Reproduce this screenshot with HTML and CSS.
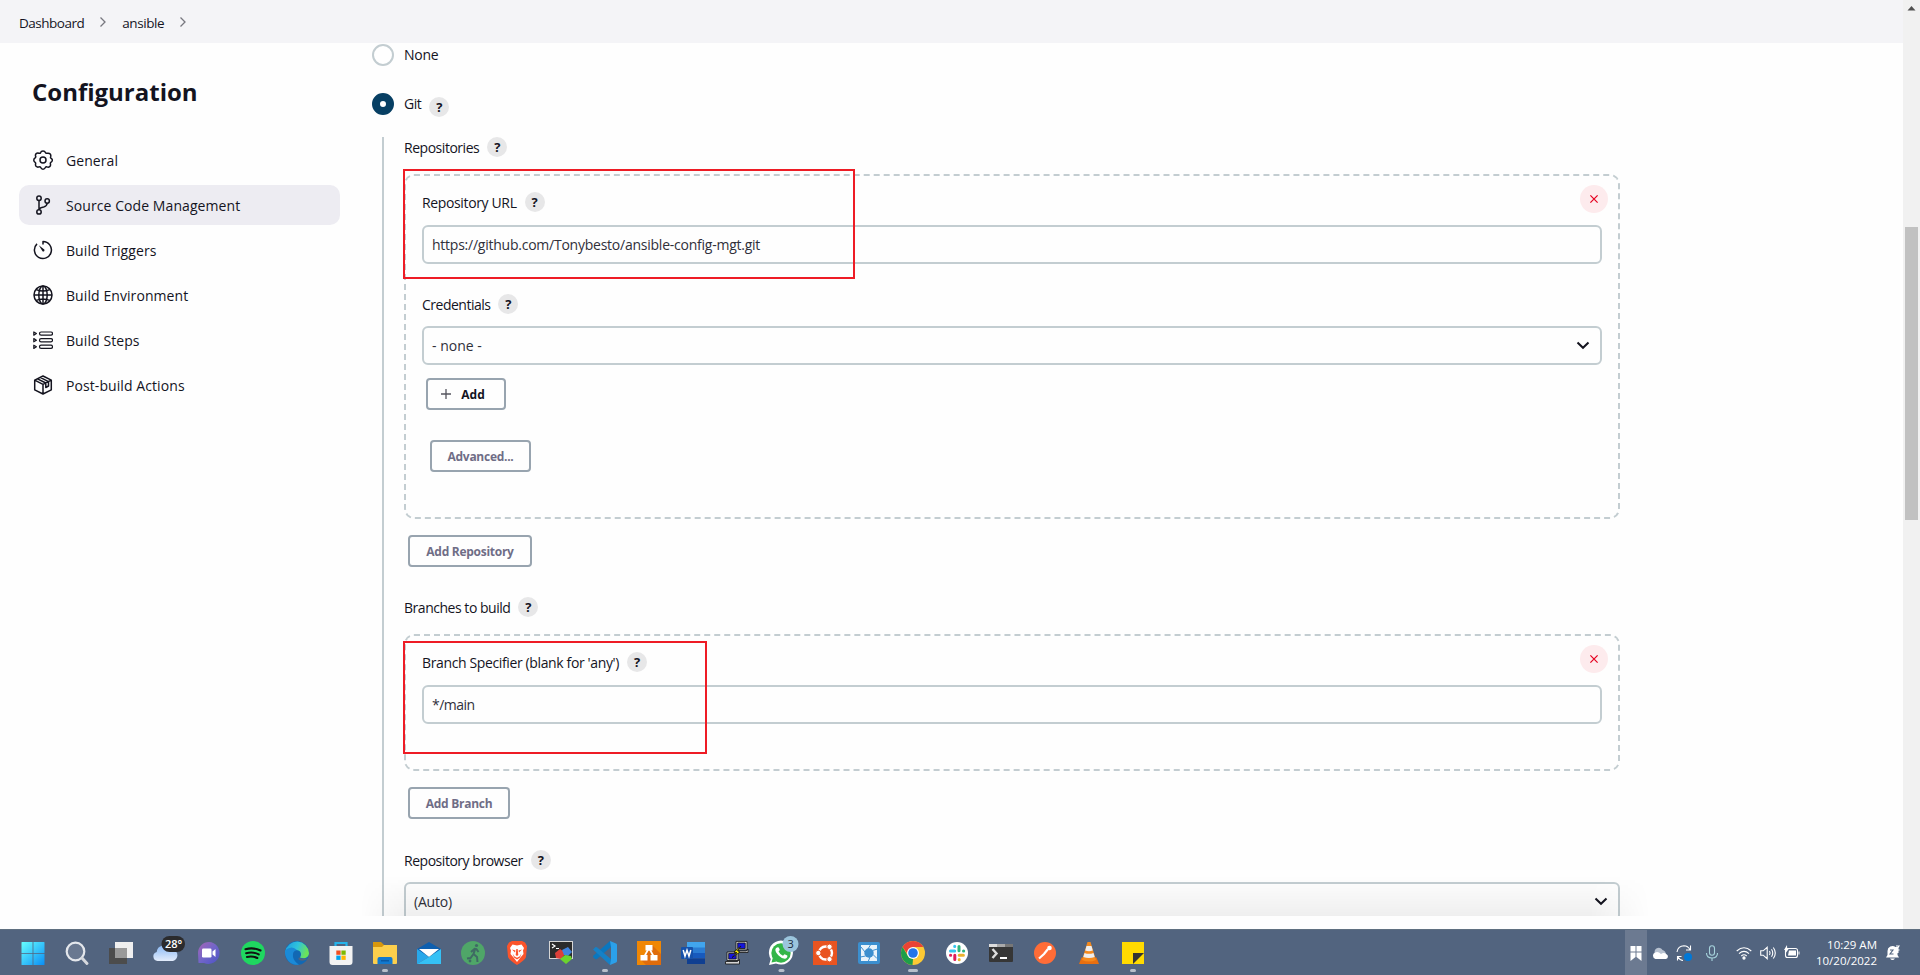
FILE: index.html
```html
<!DOCTYPE html>
<html lang="en">
<head>
<meta charset="utf-8">
<title>ansible Config</title>
<link rel="stylesheet" href="styles.css">
</head>
<body>
<div class="screen">
<header class="crumbs">
  <span class="crumb c-dash">Dashboard</span>
  <svg class="sep" viewBox="0 0 8 12"><path d="M1.5 1.5 6 6 1.5 10.5"/></svg>
  <span class="crumb c-ans">ansible</span>
  <svg class="sep" viewBox="0 0 8 12"><path d="M1.5 1.5 6 6 1.5 10.5"/></svg>
</header>
<div class="body">
  <aside class="side">
    <h1 class="title"><span>Configuration</span></h1>
    <nav class="nav">
      <a class="item"><svg class="ico" viewBox="0 0 20 20"><path d="M7.6 2.6Q8.200.9 10 .9t2.400 1.700q.3.9 1.600.7 2.200-.5 3.200.7t.4 2.800q-.4.900.6 1.600 1.300.8 1.100 2.100t-1.400 1.800q-.8.600-.5 1.600.5 1.800-.7 2.700t-2.700.3q-1-.3-1.600.6Q11.600 19.200 10 19.200t-2.300-1.700q-.6-.9-1.600-.600-1.700.6-2.800-.4t-.7-2.700q.3-.9-.5-1.500Q.700 11.500.800 10t1.300-2q.900-.6.500-1.600-.5-1.800.6-2.800t2.800-.3q1.200.2 1.600-.7z"/><circle cx="10" cy="10" r="3"/></svg><span class="n1">General</span></a>
      <a class="item active"><svg class="ico" viewBox="0 0 20 20"><circle cx="6" cy="3.300" r="2.200"/><circle cx="6" cy="16.900" r="2.200"/><circle cx="14.200" cy="6" r="2.200"/><path d="M6 5.500v9.200M14.200 8.200q-.3 3-3.500 3.700Q7 12.400 6 14.500"/></svg><span class="n2">Source Code Management</span></a>
      <a class="item"><svg class="ico" viewBox="0 0 20 20"><path d="M10 4.500V1.500a8.500 8.500 0 1 1-6 2.400"/><path class="fill" d="m5.800 5.300 5.500 4.200a1.300 1.300 0 0 1-1.800 1.800z"/></svg><span class="n3">Build Triggers</span></a>
      <a class="item"><svg class="ico" viewBox="0 0 20 20"><circle cx="10" cy="10" r="9"/><ellipse cx="10" cy="10" rx="4.200" ry="9"/><path d="M10 1v18M1 10h18M3.300 4.600Q10 7.500 16.700 4.600M3.300 15.400q6.700-2.900 13.400 0"/></svg><span class="n4">Build Environment</span></a>
      <a class="item"><svg class="ico thin" viewBox="0 0 20 20"><rect x="6.500" y="2" width="13" height="3.200" rx="1.600"/><rect x="6.500" y="8.600" width="13" height="3.200" rx="1.600"/><rect x="6.500" y="15.200" width="13" height="3.200" rx="1.600"/><path d="M.8 2v3.200l2.600-1.600zM.8 8.600v3.200l2.600-1.600zM.8 15.200v3.200l2.600-1.600z"/></svg><span class="n5">Build Steps</span></a>
      <a class="item"><svg class="ico" viewBox="0 0 20 20"><path d="m10 1 8.300 4.200v9.600L10 19l-8.300-4.200V5.200zM1.700 5.200 10 9.300l8.300-4.100M10 9.300V19M4.500 3.800l8.300 4.200v4.500l2.700-1.500V6.600L7.200 2.400"/></svg><span class="n6">Post-build Actions</span></a>
    </nav>
  </aside>
  <main class="main">
    <div class="radio-row first"><i class="radio"></i><span class="lbl l-none">None</span></div>
    <div class="radio-row second"><i class="radio on"></i><span class="lbl l-git">Git</span><b class="help low">?</b></div>
    <section class="nested">
      <div class="label"><span class="lbl l-repos">Repositories</span><b class="help">?</b></div>
      <div class="chunk repo">
        <svg class="del" viewBox="0 0 28 28"><circle cx="14" cy="14" r="14"/><path d="m10.400 10.400 7.200 7.200m0-7.200-7.200 7.200"/></svg>
        <div class="label"><span class="lbl l-url">Repository URL</span><b class="help">?</b></div>
        <div class="input"><span class="v-url">https://github.com/Tonybesto/ansible-config-mgt.git</span></div>
        <div class="label cred"><span class="lbl l-cred">Credentials</span><b class="help">?</b></div>
        <div class="input"><span class="v-none">- none -</span><svg class="caret" viewBox="0 0 14 9"><path d="m1.500 1.500 5.500 5.300 5.500-5.300"/></svg></div>
        <div class="btn add"><svg class="plus" viewBox="0 0 10 10"><path d="M5 0v10M0 5h10"/></svg><span class="b-add">Add</span></div>
        <div class="btn adv"><span class="b-adv">Advanced...</span></div>
        <div class="mark m1"></div>
      </div>
      <div class="btn add-repo"><span class="b-repo">Add Repository</span></div>
      <div class="label branches"><span class="lbl l-branches">Branches to build</span><b class="help">?</b></div>
      <div class="chunk branch">
        <svg class="del" viewBox="0 0 28 28"><circle cx="14" cy="14" r="14"/><path d="m10.400 10.400 7.200 7.200m0-7.200-7.200 7.200"/></svg>
        <div class="label"><span class="lbl l-spec">Branch Specifier (blank for 'any')</span><b class="help">?</b></div>
        <div class="input"><span class="v-main">*/main</span></div>
        <div class="mark m2"></div>
      </div>
      <div class="btn add-branch"><span class="b-branch">Add Branch</span></div>
      <div class="label browser"><span class="lbl l-browser">Repository browser</span><b class="help">?</b></div>
      <div class="input auto"><span class="v-auto">(Auto)</span><svg class="caret" viewBox="0 0 14 9"><path d="m1.500 1.500 5.500 5.300 5.500-5.300"/></svg></div>
    </section>
    <div class="shade"></div>
  </main>
</div>
<div class="scroll"><svg class="up" viewBox="0 0 17 17"><path d="M4.500 10.500h8l-4-4.500z"/></svg><div class="thumb"></div></div>
<footer class="taskbar">
  <div class="apps">
    <svg class="app" viewBox="0 0 24 24"><defs><linearGradient id="win" x1="0" y1="0" x2="1" y2="1"><stop offset="0" stop-color="#6ff"/><stop offset="1" stop-color="#0a8df5"/></linearGradient></defs><path fill="url(#win)" d="M.5 1.500a.5.500 0 0 1 .5-.5h10.600v11H.5zM12.400 1H23a.5.500 0 0 1 .5.500V12H12.400zM.5 12.800h11.100V24H1a.5.500 0 0 1-.5-.5zM12.400 12.800h11.100v10.700a.5.500 0 0 1-.5.500H12.400z"/></svg>
    <svg class="app" viewBox="0 0 24 24"><circle cx="10.500" cy="10.500" r="8.800" fill="#ffffff22" stroke="#e4e7ec" stroke-width="2.200"/><path d="m17 17 5 5.500" stroke="#d5d8dd" stroke-width="3" stroke-linecap="round"/></svg>
    <svg class="app" viewBox="0 0 24 24"><path fill="#4c4c4c" d="M0 7h18v16H0z"/><path fill="#efefef" d="M6 1h18v16H6z"/><path fill="#999" d="M6 7h12v10H6z"/></svg>
    <svg class="app wide" viewBox="0 0 34 28"><defs><linearGradient id="cl" x2="0" y2="1"><stop stop-color="#8ab9f5"/><stop offset="1" stop-color="#e3ecfb"/></linearGradient></defs><path fill="url(#cl)" d="M9.500 22a4.600 4.600 0 0 1-.8-9A7 7 0 0 1 22 10.500a5.700 5.700 0 0 1 3 11.500z"/><rect x="13.500" y="-3" width="23.500" height="16" rx="8" fill="#2b2b2d"/><text x="17" y="9" class="t-deg">28°</text></svg>
    <svg class="app" viewBox="0 0 24 24"><defs><linearGradient id="ch" x2="1" y2="1"><stop stop-color="#a565b5"/><stop offset=".5" stop-color="#7165c9"/><stop offset="1" stop-color="#4b52c5"/></linearGradient></defs><path fill="url(#ch)" d="M12 1a11 11 0 1 1-5 21H1.500L1 12A11 11 0 0 1 12 1z"/><rect x="5" y="7.500" width="9.500" height="9" rx="1.200" fill="#fff"/><path fill="#fff" d="m15.500 10.500 3-2.500v8l-3-2.500z"/></svg>
    <svg class="app" viewBox="0 0 24 24"><circle cx="12" cy="12" r="12" fill="#1fd760"/><path d="M4.500 8.200q8-2.200 15 1.300M5.200 12.200q6.800-1.800 12.500 1.200M6 15.900q5.500-1.300 10.300 1.100" fill="none" stroke="#111" stroke-width="2.100" stroke-linecap="round"/></svg>
    <svg class="app" viewBox="0 0 24 24"><defs><linearGradient id="ed" x2="1" y2=".3"><stop stop-color="#1d9be0"/><stop offset=".55" stop-color="#2fc3dc"/><stop offset="1" stop-color="#6be25a"/></linearGradient></defs><circle cx="12" cy="12" r="12" fill="#1268b3"/><path fill="url(#ed)" d="M.2 10.500A12 12 0 0 1 24 12c0 5-5.500 6.200-9 4.500 2.300-3 1-7.500-4-7.500Q4 9 1 15z"/><path fill="#1b8ad7" d="M.5 9Q7 4 12 9q-5 1-4 7 1 4.500 6 7.700A12 12 0 0 1 .5 9z"/><path fill="#52647f" d="M14 16.300q-2 3 3 3.500 4 .2 6-2.800-1 .8-4.500.6T14 16.300z"/></svg>
    <svg class="app" viewBox="0 0 24 24"><path d="M6.500 6V2h11v4" fill="none" stroke="#25b3ea" stroke-width="2.200"/><path fill="#f3f3f3" d="M.5 5h23v16a3 3 0 0 1-3 3h-17a3 3 0 0 1-3-3z"/><path fill="#f25022" d="M7.300 9.500h4.300v4.300H7.300z"/><path fill="#7fba00" d="M12.400 9.500h4.300v4.300h-4.300z"/><path fill="#00a4ef" d="M7.300 14.600h4.300v4.300H7.300z"/><path fill="#ffb900" d="M12.400 14.600h4.300v4.300h-4.300z"/></svg>
    <svg class="app dot" viewBox="0 0 24 28"><path fill="#d8970d" d="M0 1h8l3 3v5H0z"/><path fill="#fdcf4c" d="M0 6h9l2-2h13v18a1 1 0 0 1-1 1H1a1 1 0 0 1-1-1z"/><path fill="#1279cf" d="M4.500 23v-5a2 2 0 0 1 2-2h11a2 2 0 0 1 2 2v5z"/><path fill="#0a5aa5" d="M8 19h8v1.500H8z"/><rect x="9" y="28" width="6" height="3" rx="1.500" fill="#b7bfcb"/></svg>
    <svg class="app" viewBox="0 0 24 24"><path fill="#0f5fae" d="M0 8 12 1l12 7v5H0z"/><path fill="#fff" d="M2 8h20l-10 8z"/><path fill="#28a8ea" d="M0 8l12 8L0 23z"/><path fill="#35c1f5" d="M24 8v15H0l12-7z"/></svg>
    <svg class="app" viewBox="0 0 24 24"><circle cx="12" cy="12" r="12" fill="#4fa668"/><circle cx="15.500" cy="4.500" r="1.600" fill="#3f6a64"/><path d="m14.500 7-2 6 3.500 3 .5 5M12.500 13l-3 4-3.500.5M14 7.500 10 11M15 7.500l2.500 3.500" fill="none" stroke="#3f6a64" stroke-width="2"/><circle cx="9" cy="20" r="1.400" fill="#3f6a64"/></svg>
    <svg class="app" viewBox="0 0 24 24"><path fill="#fb542b" d="m7 0-3 1.500L2 5l1 11q1 3 9 8 8-5 9-8l1-11-2-3.500L17 0z"/><path fill="#fff" d="m12 4.500-4.500-1L5 7l1 2.500L5.500 13l3 3.500L12 21l3.500-4.500 3-3.500L18 9.500 19 7l-2.500-3.500z"/><path fill="#fb542b" d="m7 8.500 3.500 1-.5 2zM17 8.500l-3.500 1 .5 2zM11.300 8h1.400l.6 6-1.300 1-1.300-1zM7.500 12.500l2 3 2.500 1.300 2.500-1.300 2-3-1.500 4L12 18.500 9 16.500z"/></svg>
    <svg class="app" viewBox="0 0 24 24"><path fill="#d5d5d5" d="M0 0h24v18H0z"/><path fill="#2b2b2b" d="M1 1h22v16H1z"/><path d="m3 3 3 2-3 2M7 7.500h3" stroke="#fff" fill="none" stroke-width="1.200"/><path fill="#dc3f38" d="m6 12 5-4 6 4-5 6-5-1z"/><path fill="#4083dd" d="m13 9 6-3 4 5-4 4-4-1z"/><path fill="#6bd32e" d="m11 18 5-4 6 1 1 3-6 5z"/></svg>
    <svg class="app" viewBox="0 0 24 24"><path fill="#0b77bf" d="m17 0 2 5L4 18l-1.500.3L.5 16.500 0 15z"/><path fill="#1681c7" d="M0 8.500 2.500 6 4 6.200 19 19l-2 5z"/><path fill="#2ba0ea" d="m17 0 6 2.500a1.500 1.500 0 0 1 1 1.400v16.200a1.500 1.500 0 0 1-1 1.400L17 24l1-5V6z"/><rect x="9" y="28" width="6" height="3" rx="1.500" fill="#b7bfcb"/></svg>
    <svg class="app" viewBox="0 0 24 24"><path fill="#f08705" d="M0 0h24v24H0z"/><path fill="#df6c0c" d="m15 4 9 9v11H9l-5-5 6-8z"/><path d="m12 7-5 9M12 7l5 9" stroke="#fff" stroke-width="1.700"/><path fill="#fff" d="M8.500 4h7v5.500h-7zM3.500 14h7v5.500h-7zM13.500 14h7v5.500h-7z"/></svg>
    <svg class="app" viewBox="0 0 24 24"><path fill="#41a5ee" d="M6 1h18v6H6z"/><path fill="#2b7cd3" d="M6 6.500h18V12H6z"/><path fill="#185abd" d="M6 12h18v5.500H6z"/><path fill="#103f91" d="M6 17.500h18V23H6z"/><rect y="6" width="12" height="12" rx="1" fill="#1651aa"/><path d="m2.200 9 1.800 6.200L6 9.200l2 6L9.800 9" stroke="#fff" stroke-width="1.500" fill="none"/></svg>
    <svg class="app" viewBox="0 0 24 24"><g stroke="#111" stroke-width=".8"><path fill="#d4d4d4" d="M11 .4h11v8.500H11zM9.500 10h12l1.500-2v3.500H9.500zM2 11h11v8.500H2zM.5 20.500h12l2-2v4.500H.5z"/><path fill="#1515dd" d="M12.700 2h7.500v5.500h-7.500zM3.700 12.500h7.500V18H3.700z"/><path fill="#fff000" d="m16 5-7 6 3 .7L7 16.500l8-5.500-2.500-1.200z"/></g></svg>
    <svg class="app wide" viewBox="0 0 34 28"><path fill="#fff" d="M5 26 6.800 20A12 12 0 1 1 12 24.500z"/><circle cx="17" cy="14" r="9.700" fill="#34b648"/><path fill="#34b648" d="m7.500 23.500 1.400-5 4 4z"/><path fill="#fff" d="M13 8.500q1.500-.8 2 .5l.8 2-1.200 1.500q1.300 3 4.400 4.200l1.500-1.500 2.800 1.300q.5 2.500-2.200 3.300-3 .2-6.500-3.300t-3.200-6q.2-1.500 1.600-2z"/><circle cx="26.500" cy="5" r="8" fill="#9bc5dd"/><text x="23.500" y="9.200" class="t-badge">3</text><rect x="14.500" y="30" width="6" height="3" rx="1.500" fill="#b7bfcb"/></svg>
    <svg class="app" viewBox="0 0 24 24"><path fill="#e95420" d="M0 0h24v24H0z"/><circle cx="12.500" cy="12" r="6.500" fill="none" stroke="#fff" stroke-width="2.400"/><g fill="#fff" stroke="#e95420"><circle cx="5.300" cy="12" r="2.700"/><circle cx="16.500" cy="5.800" r="2.700"/><circle cx="16.500" cy="18.200" r="2.700"/></g></svg>
    <svg class="app" viewBox="0 0 24 24"><rect x="1" y="1" width="22" height="22" rx="2" fill="#3b8fcf"/><path fill="#e8f3fa" d="M4 4h16v16H4z"/><circle cx="12" cy="12" r="4.700" fill="#3b8fcf"/><path d="m11 8 3-5M15.500 9.500l5-1.500M16 13.500l4 4M13 16l-2 5M8.500 15l-5 1M8 11 4 6" stroke="#3b8fcf" stroke-width="1"/></svg>
    <svg class="app" viewBox="0 0 24 24"><circle cx="12" cy="12" r="12" fill="#fcc934"/><path fill="#ea4335" d="M1.600 6a12 12 0 0 1 20.800 0H12L8 15z"/><path fill="#1e9e4a" d="M1.600 6 7 15l5 3-.5 6A12 12 0 0 1 1.600 6z"/><circle cx="12" cy="12" r="6" fill="#fff"/><circle cx="12" cy="12" r="4.800" fill="#2374e8"/><rect x="7" y="28" width="10" height="3" rx="1.500" fill="#b7bfcb"/></svg>
    <svg class="app" viewBox="0 0 24 24"><circle cx="12" cy="12" r="11" fill="#fff"/><g stroke-width="3" stroke-linecap="round"><path stroke="#36c5f0" d="M5.500 10h4.200M9.700 5.300v.2"/><path stroke="#2eb67d" d="M14 5.500v4.200M18.500 10h.2"/><path stroke="#ecb22e" d="M14.200 14.200h4.200M14.200 18.500v.2"/><path stroke="#e01e5a" d="M9.800 14.200v4.300M5.500 14.200h.2"/></g></svg>
    <svg class="app" viewBox="0 0 24 24"><rect y="3" width="24" height="18" rx="1" fill="#363636"/><path fill="#ddd" d="M0 3h8v3H0z"/><path fill="#aaa" d="M8 3h8v3H8z"/><path fill="#777" d="M16 3h8v3h-8z"/><path d="m3.500 8 4 4.500-4 4.500" fill="none" stroke="#ddd" stroke-width="2.400"/><path fill="#fff" d="M11 16h7v2h-7z"/></svg>
    <svg class="app" viewBox="0 0 24 24"><circle cx="12" cy="12" r="11" fill="#ff6c37"/><path d="m6 17.500 5-4.500 4-5" stroke="#fff" stroke-width="2.200" fill="none"/><circle cx="16.500" cy="7" r="2.300" fill="#fff"/></svg>
    <svg class="app" viewBox="0 0 24 24"><path fill="#e86f10" d="M4.500 16.500h15L22 23H2z"/><path fill="#f58a1d" d="M10.500 1h3L19 19q-7 3-14 0z"/><path fill="#eee" d="M9.500 5h5l1.300 4.500q-3.800 1.500-7.600 0zM7.500 12q4.500 1.700 9 0l1.200 4q-5.700 2-11.400 0z"/></svg>
    <svg class="app" viewBox="0 0 24 24"><path fill="#ffda00" d="M1 1h22v22H1z"/><path fill="#333" d="M12 12h11L12 23z"/><rect x="9" y="28" width="6" height="3" rx="1.500" fill="#b7bfcb"/></svg>
  </div>
  <div class="tray">
    <div class="hot"><svg viewBox="0 0 12 16"><path fill="#fff" d="M.5 1h5v5.500h-5zM6.500 1h5v5.500h-5zM.5 7.500h5V12l-5 4zM6.500 7.500h5V16l-5-4z"/></svg></div>
    <svg class="ti cloud" viewBox="0 0 16 16"><path fill="#b8c2d0" d="M3 9a4 4 0 0 1 7.500-4Q14 6 14 10z"/><path fill="#fff" d="M3.500 14a3.400 3.400 0 0 1-.3-6.500Q6 6 9 9q3-2 5.500.3A2.500 2.500 0 0 1 14 14z"/></svg>
    <svg class="ti sync" viewBox="0 0 16 16"><path d="M1 7Q2 1 8 .8q4 0 6 4M14.500.500v4.500h-4.500M7 15.500q-3 0-5-3.500M1.500 15.500v-4h4" fill="none" stroke="#fff" stroke-width="1.100"/><circle cx="12" cy="12" r="4" fill="#0078d7"/></svg>
    <svg class="ti mic" viewBox="0 0 16 16"><rect x="5.500" y=".7" width="5" height="9.600" rx="2.500"/><path d="M2.500 8q0 5 5.500 5t5.500-5M8 13v3"/></svg>
    <svg class="ti wifi" viewBox="0 0 16 16"><path d="M.7 6q7.300-6.500 14.600 0M3 8.600q5-4.600 10 0M5.300 11q2.700-2.500 5.400 0"/><circle cx="8" cy="13" r="1.100" fill="#fff"/></svg>
    <svg class="ti vol" viewBox="0 0 16 16"><path d="M.7 5.800v4.400h2.500l4 3.500V2.300l-4 3.500zM9.500 6q1.200 2 0 4M11.500 4.200q2.500 3.800 0 7.600M13.300 2.500q4 5.500 0 11"/></svg>
    <svg class="ti bat" viewBox="0 0 16 16"><rect x="1.500" y="3.500" width="12" height="9" rx="2"/><path fill="#fff" d="M5 5.500h7v5H4zM14.500 6.500h1v3h-1zM3 0 0 5h2L1 9l4-5.500H3.200z" stroke="none"/></svg>
    <div class="clock"><span class="time">10:29 AM</span><span class="date">10/20/2022</span></div>
    <svg class="ti bell" viewBox="0 0 16 16"><path fill="#fff" stroke="none" d="M1 12.500 2.500 10V6a5 5 0 0 1 8-4h3v6h-1v2l1.500 2.500zM5 13.500h5q-2.500 3-5 0z"/><path d="M5 5h3L5 9h3.500" stroke="#52647f"/><path d="M11 1h3l-3 4h3.500"/></svg>
  </div>
</footer>
</div>
</body>
</html>
```
FILE: styles.css
```css
* { box-sizing: border-box; }
body { margin: 0; background: #fefefe; color: #14141f; font-family: "Open Sans", "Noto Sans", sans-serif; font-size: 14px; overflow: hidden; }
.screen { position: relative; display: grid; grid-template: 43px 886px 46px / 1903px 17px; width: 1920px; height: 975px; }
.screen span, .screen text { white-space: nowrap; }
.crumbs { display: flex; align-items: center; height: 43px; padding-left: 19px; background: #f4f4f7; }
.crumb { font-size: 13.500px; line-height: 20px; padding-top: 2px; }
.c-dash { letter-spacing: -.5px; }
.c-ans { letter-spacing: -.4px; }
.sep { width: 8px; height: 12px; margin: 0 15px; fill: none; stroke: #77777f; stroke-width: 1.300; }
.body { grid-row: 2; display: flex; min-height: 0; }
.side { width: 360px; padding: 31px 20px 0 19px; }
.title { margin: 0 0 30px 13px; font-size: 24px; line-height: 36px; height: 36px; font-weight: 700; }
.nav { display: grid; gap: 5px; }
.item { display: flex; align-items: center; gap: 13px; height: 40px; width: 321px; padding-left: 14px; border-radius: 10px; font-size: 14px; font-weight: 500; letter-spacing: .08px; }
.item span { padding-top: 1px; }
.active { background: #edecf2; }
.ico { width: 20px; height: 20px; fill: none; stroke: #14141f; stroke-width: 1.5; stroke-linejoin: round; }
.ico .fill { fill: #14141f; stroke: none; }
.thin { stroke-width: 1.2; }
.main { position: relative; width: 1543px; height: 873px; overflow: hidden; padding-left: 12px; }
.radio-row { display: flex; align-items: center; height: 24px; }
.radio { width: 22px; height: 22px; border: 2px solid #c3cdd1; border-radius: 50%; margin-right: 10px; background: #fff; }
.radio.on { border: 8px solid #073f63; }
.second { margin-top: 25px; }
.lbl { font-size: 14px; line-height: 20px; }
.l-none { letter-spacing: -.25px; }
.l-git { letter-spacing: -.45px; }
.l-repos, .l-branches, .l-browser { letter-spacing: -.47px; }
.l-url { letter-spacing: -.36px; }
.l-cred { letter-spacing: -.5px; }
.l-spec { letter-spacing: -.37px; }
.v-url { letter-spacing: -.24px; }
.v-main { letter-spacing: -.5px; }
.v-auto { letter-spacing: -.2px; }
.input span { color: #30303a; }
.help { width: 20px; height: 20px; border-radius: 50%; background: #e7e7e8; text-align: center; font-size: 13px; line-height: 20px; font-weight: 700; margin-left: 8px; }
.low { margin-top: 6px; }
.nested { margin: 21px 0 0 10px; padding-left: 20px; width: 1238px; border-left: 2px solid #c3cdd1; height: 800px; }
.label { display: flex; height: 20px; }
.label .lbl { padding-top: 1px; }
.chunk { position: relative; width: 1216px; padding: 16px 16px 0; border: 2px dashed #c3cdd1; border-radius: 10px; margin-top: 17px; }
.repo { height: 345px; }
.branch { height: 137px; }
.del { position: absolute; right: 10px; top: 9px; width: 28px; height: 28px; fill: #fdebed; stroke: none; }
.del path { stroke: #e6001f; stroke-width: 1.200; }
.input { position: relative; display: flex; align-items: center; justify-content: space-between; height: 39px; margin-top: 13px; padding: 0 10px 0 8px; border: 2px solid #c3cdd1; border-radius: 6px; background: #fefefe; }
.cred { margin-top: 30px; }
.cred + .input { margin-top: 12px; }
.caret { width: 14px; height: 9px; fill: none; stroke: #14141f; stroke-width: 2; }
.btn { display: flex; align-items: center; justify-content: center; height: 32px; border: 2px solid #98a4af; border-radius: 4px; color: #6f6d86; font-size: 12px; letter-spacing: -.27px; font-weight: 700; background: #fefefe; }
.btn span { padding-top: 1px; }
.add { width: 80px; margin: 13px 0 0 4px; gap: 10px; color: #14141f; padding-right: 6px; letter-spacing: 0; }
.plus { width: 10px; height: 10px; stroke: #55555f; stroke-width: 1.300; }
.adv { width: 101px; margin: 30px 0 0 8px; }
.add-repo { width: 124px; margin: 16px 0 0 4px; }
.branches { margin-top: 30px; }
.add-branch { width: 102px; margin: 16px 0 0 4px; }
.browser { margin-top: 31px; }
.auto { width: 1216px; margin-top: 12px; }
.mark { position: absolute; border: 2px solid #ee1c25; left: -3px; }
.m1 { top: -7px; width: 452px; height: 110px; }
.m2 { top: 5px; width: 304px; height: 113px; }
.shade { position: absolute; left: 0; top: 833px; width: 1290px; height: 40px; background: linear-gradient(to bottom, #0000, #0000000f); -webkit-mask-image: linear-gradient(to right, transparent, #000 50px, #000 1230px, transparent); mask-image: linear-gradient(to right, transparent, #000 50px, #000 1230px, transparent); }
.scroll { grid-area: 1 / 2 / 3 / 3; background: #f1f1f1; }
.up { display: block; width: 17px; height: 17px; fill: #505050; }
.thumb { width: 13px; height: 293px; margin: 210px 0 0 2px; background: #c1c1c1; }
.taskbar { grid-area: 3 / 1 / 4 / 3; display: flex; justify-content: space-between; background: #52647f; border-top: 1px solid #5f6f80; }
.apps { display: flex; padding-left: 10.500px; }
.app { width: 24px; height: 24px; margin: 11px 10px 0; overflow: visible; }
.wide { width: 34px; height: 28px; margin: 9px 5px 0; }
.dot { height: 28px; }
.t-deg { font: 600 11px "Open Sans", sans-serif; fill: #fff; }
.t-badge { font: 11px "Open Sans", sans-serif; fill: #1b2b3a; }
.tray { display: flex; width: 295px; color: #fff; }
.hot { width: 22px; background: #6c7a91; padding: 15px 5px 0; }
.hot svg { display: block; width: 12px; height: 16px; }
.ti { width: 16px; height: 16px; margin-top: 15px; overflow: visible; fill: none; stroke: #fff; stroke-width: 1.100; flex: none; }
.cloud { margin-left: 5px; stroke: none; }
.sync { margin-left: 8px; stroke: none; }
.mic { margin-left: 12px; stroke: #a6d3dc; }
.wifi { margin-left: 16px; }
.vol, .bat { margin-left: 8px; }
.clock { display: flex; flex-direction: column; align-items: flex-end; width: 77px; padding-top: 7px; font-size: 11.500px; line-height: 16px; }
.bell { margin-left: 8px; }
```
